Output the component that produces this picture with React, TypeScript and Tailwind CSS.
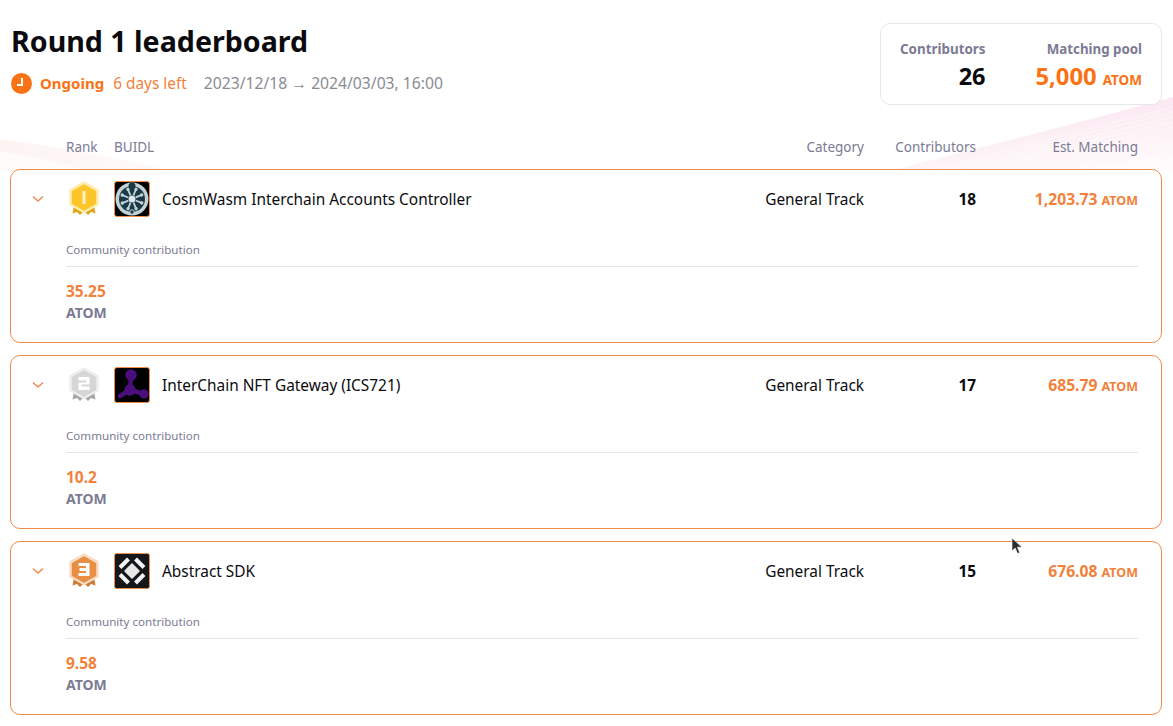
import React from 'react';

const font = { fontFamily: '"Noto Sans", sans-serif' };

type Medal = { fill: string; glow: string; ribbon: string; digit: string; mark: string };

const medals: Record<string, Medal> = {
  gold: { fill: '#fcc62b', glow: '#fdeeb0', ribbon: '#dfa81c', digit: '1', mark: '#fff3c4' },
  silver: { fill: '#d6d6d6', glow: '#eeeeee', ribbon: '#a8a8a8', digit: '2', mark: '#ffffff' },
  bronze: { fill: '#e98f45', glow: '#f8dcc4', ribbon: '#cf7a32', digit: '3', mark: '#ffffff' },
};

const RankBadge = ({ kind }: { kind: string }) => {
  const m = medals[kind];
  return (
    <svg width="32" height="36" viewBox="0 0 32 36" className="block ml-[2px]">
      <path d="M6 24l-1.500 8.500 4.500-1.500 3 3 4-4 4 4 3-3 4.500 1.500L26 24z" fill={m.ribbon} />
      <path d="M16 1.500L29.500 9V23.500L16 31 2.500 23.500V9z" fill={m.glow} stroke={m.glow} strokeWidth="2.500" strokeLinejoin="round" />
      <path d="M16 4.500L27 10.800V22.200L16 28.500 5 22.200V10.800z" fill={m.fill} stroke={m.fill} strokeWidth="2.500" strokeLinejoin="round" />
      {m.digit === '1' && <rect x="14.500" y="10" width="3" height="13" fill={m.mark} />}
      {m.digit === '2' && (
        <path d="M10.500 10h11v7.500h-8v2h8V23h-11v-7.500h8v-2h-8z" fill={m.mark} />
      )}
      {m.digit === '3' && (
        <path d="M10.500 10h11v13h-11v-3h7.500v-2h-6.500v-3H18v-2h-7.500z" fill={m.mark} />
      )}
    </svg>
  );
};

const LogoFrame = ({ children }: { children: React.ReactNode }) => (
  <div className="w-9 h-9 rounded-[3px] border border-[#f08a44] bg-black overflow-hidden shrink-0">
    <svg viewBox="0 0 34 34" width="34" height="34" className="block">
      {children}
    </svg>
  </div>
);

const WheelLogo = () => (
  <LogoFrame>
    <circle cx="17" cy="17" r="16.500" fill="#c3d4d9" />
    <circle cx="17" cy="17" r="13" fill="#1b3a45" />
    <circle cx="17" cy="17" r="3.500" fill="#dbe7ea" />
    {[0, 45, 90, 135, 180, 225, 270, 315].map((a) => (
      <g key={a} transform={`rotate(${a + 22} 17 17)`}>
        <line x1="17" y1="13" x2="17" y2="6.500" stroke="#c3d4d9" strokeWidth="1.800" />
        <circle cx="17" cy="6.500" r="1.700" fill="#c3d4d9" />
      </g>
    ))}
    <circle cx="17" cy="4" r="3.500" fill="#1b3a45" />
    <circle cx="17" cy="30" r="2.200" fill="#1b3a45" stroke="#c3d4d9" />
  </LogoFrame>
);

const GatewayLogo = () => (
  <LogoFrame>
    <g stroke="#4a0f7d" strokeWidth="4.500" fill="#4a0f7d" strokeLinecap="round">
      <line x1="16" y1="8" x2="15" y2="22" />
      <line x1="15" y1="22" x2="5" y2="28" />
      <line x1="15" y1="22" x2="29" y2="26" />
      <circle cx="16" cy="7" r="3.500" />
      <circle cx="15" cy="22" r="3.500" />
      <circle cx="29" cy="26" r="2.500" />
    </g>
  </LogoFrame>
);

const DiamondLogo = () => (
  <LogoFrame>
    <rect width="34" height="34" fill="#14181a" />
    <path d="M17 10L24 17 17 24 10 17z" fill="#e8e8e8" stroke="#e8e8e8" strokeWidth="1.500" strokeLinejoin="round" />
    <g stroke="#f4f4f4" strokeWidth="4">
      <line x1="5" y1="13.500" x2="13.500" y2="5" />
      <line x1="20.500" y1="5" x2="29" y2="13.500" />
      <line x1="5" y1="20.500" x2="13.500" y2="29" />
      <line x1="20.500" y1="29" x2="29" y2="20.500" />
    </g>
  </LogoFrame>
);

const Chevron = () => (
  <svg width="12" height="12" viewBox="0 0 12 12" fill="none" stroke="#f2884b" strokeWidth="1.500" strokeLinecap="round" strokeLinejoin="round">
    <path d="M1.500 4l4.500 4 4.500-4" />
  </svg>
);

const WaveBackdrop = () => (
  <svg className="absolute left-0 top-[95px] pointer-events-none" width="1173" height="80" viewBox="0 0 1173 80" fill="none">
    <defs>
      <linearGradient id="waveLeft" x1="0" y1="0" x2="1" y2="0">
        <stop offset="0" stopColor="#fdf3f3" />
        <stop offset="1" stopColor="#fffbfa" />
      </linearGradient>
      <linearGradient id="waveRight" x1="0.300" y1="0" x2="0.750" y2="1">
        <stop offset="0.150" stopColor="#fbe3ee" />
        <stop offset="0.650" stopColor="#fdf3f7" />
        <stop offset="1" stopColor="#fffafc" />
      </linearGradient>
    </defs>
    <path d="M0 44C60 52 120 64 175 76H0z" fill="url(#waveLeft)" />
    <path d="M0 56C30 60 60 68 90 76H0z" fill="#ffffff" fillOpacity="0.600" />
    <path d="M890 76C980 52 1080 28 1173 2V76z" fill="url(#waveRight)" />
    {[0, 1, 2, 3, 4].map((i) => (
      <path key={i} d={`M${925 + i * 12} 76C1010 ${54 + i * 3} 1090 ${34 + i * 4} 1173 ${12 + i * 5}`} stroke="#ffffff" strokeOpacity="0.450" />
    ))}
  </svg>
);

const Cursor = () => (
  <svg className="absolute left-[1011px] top-[537px]" width="13" height="18" viewBox="0 0 13 18">
    <path d="M1 1v13l3.200-3 2.300 5.500 2.200-1L6.400 10.200H11z" fill="#2b2d31" stroke="#ffffff" strokeWidth="0.600" />
  </svg>
);

const rows = [
  { medal: 'gold', logo: <WheelLogo />, name: 'CosmWasm Interchain Accounts Controller', count: 18, est: '1,203.73', given: '35.25' },
  { medal: 'silver', logo: <GatewayLogo />, name: 'InterChain NFT Gateway (ICS721)', count: 17, est: '685.79', given: '10.2' },
  { medal: 'bronze', logo: <DiamondLogo />, name: 'Abstract SDK', count: 15, est: '676.08', given: '9.58' },
];

const cols = 'grid grid-cols-[48px_1fr_160px_112px_162px] items-center';

export default function App() {
  return (
    <div className="relative w-[1173px] h-[726px] overflow-hidden bg-white text-[#0b0b0f]" style={font}>
      <WaveBackdrop />
      <div className="relative pl-[10px] pr-[11px] pt-[23px]">
        <div className="flex justify-between h-[82px]">
          <div className="pl-px">
            <h1 className="text-[28.6px] leading-9 font-bold">Round 1 leaderboard</h1>
            <div className="flex items-center mt-[12px] h-6">
              <span className="w-[21px] h-[21px] rounded-full bg-[#f97316] relative shrink-0">
                <span className="absolute left-[10px] top-[5px] w-[2px] h-[6px] bg-white" />
                <span className="absolute left-[6px] top-[11px] w-[6px] h-[2px] bg-white" />
              </span>
              <div className="flex items-baseline text-[15.4px] leading-6">
                <span className="ml-2 text-[15px] font-bold text-[#f97316]">Ongoing</span>
                <span className="ml-[9px] text-[#f2813b]">6 days left</span>
                <span className="ml-[17px] text-[15.7px] text-[#8b8b93]">2023/12/18 → 2024/03/03, 16:00</span>
              </div>
            </div>
          </div>
          <div className="flex w-[282px] rounded-[10px] border border-[#e7e7ea] bg-white pl-[19px] pr-[19px] pt-[15px] justify-between">
            <div className="text-right">
              <div className="text-[13.4px] leading-5 font-bold text-[#7b7b93]">Contributors</div>
              <div className="text-[23.5px] leading-8 font-bold mt-px">26</div>
            </div>
            <div className="text-right">
              <div className="text-[13.3px] leading-5 font-bold text-[#7b7b93]">Matching pool</div>
              <div className="leading-8 font-bold mt-px text-[#f97316]">
                <span className="text-[23.8px]">5,000</span>
                <span className="text-[13.5px] ml-[6px]">ATOM</span>
              </div>
            </div>
          </div>
        </div>

        <div className={`${cols} pl-[56px] pr-[24px] mt-[32px] h-5 text-[13.5px] text-[#7b7b93]`}>
          <div>Rank</div>
          <div>BUIDL</div>
          <div className="text-right">Category</div>
          <div className="text-right">Contributors</div>
          <div className="text-right">Est. Matching</div>
        </div>

        <div className="flex flex-col gap-3 mt-[12px]">
          {rows.map((r) => (
            <div key={r.name} className="h-[174px] rounded-[10px] border border-[#ee8a4a] bg-white pl-[55px] pr-[23px] relative">
              <div className="absolute left-[21px] top-[23px]">
                <Chevron />
              </div>
              <div className={`${cols} h-[58px]`}>
                <RankBadge kind={r.medal} />
                <div className="flex items-center gap-3 text-[15.4px]">
                  {r.logo}
                  <span className="pt-[2px]">{r.name}</span>
                </div>
                <div className="text-right text-[15.4px] pt-[2px]">General Track</div>
                <div className="text-right text-[15.4px] font-bold pt-[2px]">{r.count}</div>
                <div className="text-right font-bold text-[15.7px] text-[#f2813b] pt-[2px]">
                  {r.est} <span className="text-[12.5px]">ATOM</span>
                </div>
              </div>
              <div className="mt-[14px] text-[11.6px] leading-4 text-[#7b7b93] pb-[8px] border-b border-[#e5e5e8]">Community contribution</div>
              <div className="mt-[12px] text-[15.5px] leading-6 font-bold text-[#f2813b]">{r.given}</div>
              <div className="text-[14px] leading-5 font-bold text-[#7b7b93]">ATOM</div>
            </div>
          ))}
        </div>
      </div>
      <Cursor />
    </div>
  );
}
